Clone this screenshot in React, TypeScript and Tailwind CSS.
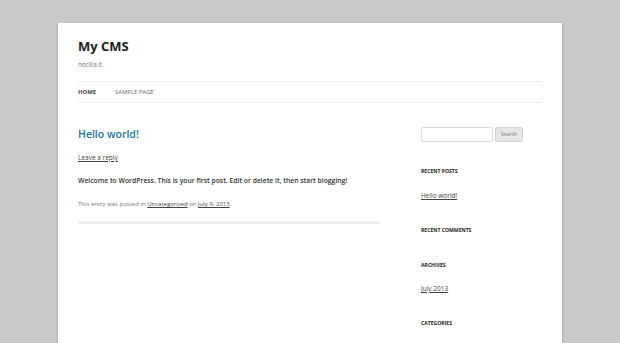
export default function App() {
  return (
    <div className="min-h-[343px] bg-[#c9c9c9] pt-[23px] font-['Open_Sans',sans-serif]">
      <div className="mx-auto w-[504px] min-h-[320px] bg-white px-[20px] shadow-[0_1px_2px_rgba(0,0,0,0.3)]">
        <header className="pt-[14px]">
          <h1 className="text-[13px] font-bold leading-[18px] text-[#222]">My CMS</h1>
          <p className="mt-[6px] text-[6.2px] leading-[8px] text-[#757575]">nocilla.it</p>
          <nav className="mt-[12px] border-y border-[#ededed] h-[22px] flex items-center gap-[19px] text-[5.9px] uppercase">
            <span className="font-bold text-[#444]">Home</span>
            <span className="text-[#6a6a6a]">Sample Page</span>
          </nav>
        </header>
        <div className="flex gap-[41px]">
          <main className="w-[302px]">
            <h2 className="mt-[22px] text-[10.5px] font-semibold leading-[18px] text-[#21759b]">Hello world!</h2>
            <a className="mt-[11px] block text-[6.5px] leading-[8px] text-[#444] underline">Leave a reply</a>
            <p className="mt-[14px] text-[6.8px] font-semibold leading-[9px] text-[#333]">
              Welcome to WordPress. This is your first post. Edit or delete it, then start blogging!
            </p>
            <p className="mt-[15px] text-[6px] leading-[8px] text-[#757575]">
              This entry was posted in <a className="underline text-[#444]">Uncategorized</a> on{" "}
              <a className="underline text-[#444]">July 9, 2013</a>.
            </p>
            <div className="mt-[13px] h-[3px] bg-[#ededed]" />
          </main>
          <aside className="flex-1 pt-[24px]">
            <div className="flex items-center gap-[2px]">
              <div className="w-[72px] h-[15px] rounded-[2px] border border-[#dcdcdc] bg-white" />
              <button className="h-[15px] w-[28px] rounded-[2px] border border-[#d2d2d2] bg-[#e6e6e6] text-[5px] text-[#7c7c7c]">
                Search
              </button>
            </div>
            <h3 className="mt-[25px] text-[5.1px] font-bold leading-[8px] text-[#222] uppercase">Recent Posts</h3>
            <a className="mt-[17px] block text-[6.5px] leading-[8px] text-[#444] underline">Hello world!</a>
            <h3 className="mt-[26px] text-[5.1px] font-bold leading-[8px] text-[#222] uppercase">Recent Comments</h3>
            <h3 className="mt-[27px] text-[5.1px] font-bold leading-[8px] text-[#222] uppercase">Archives</h3>
            <a className="mt-[16px] block text-[6.5px] leading-[8px] text-[#444] underline">July 2013</a>
            <h3 className="mt-[26px] text-[5.1px] font-bold leading-[8px] text-[#222] uppercase">Categories</h3>
          </aside>
        </div>
      </div>
    </div>
  );
}
